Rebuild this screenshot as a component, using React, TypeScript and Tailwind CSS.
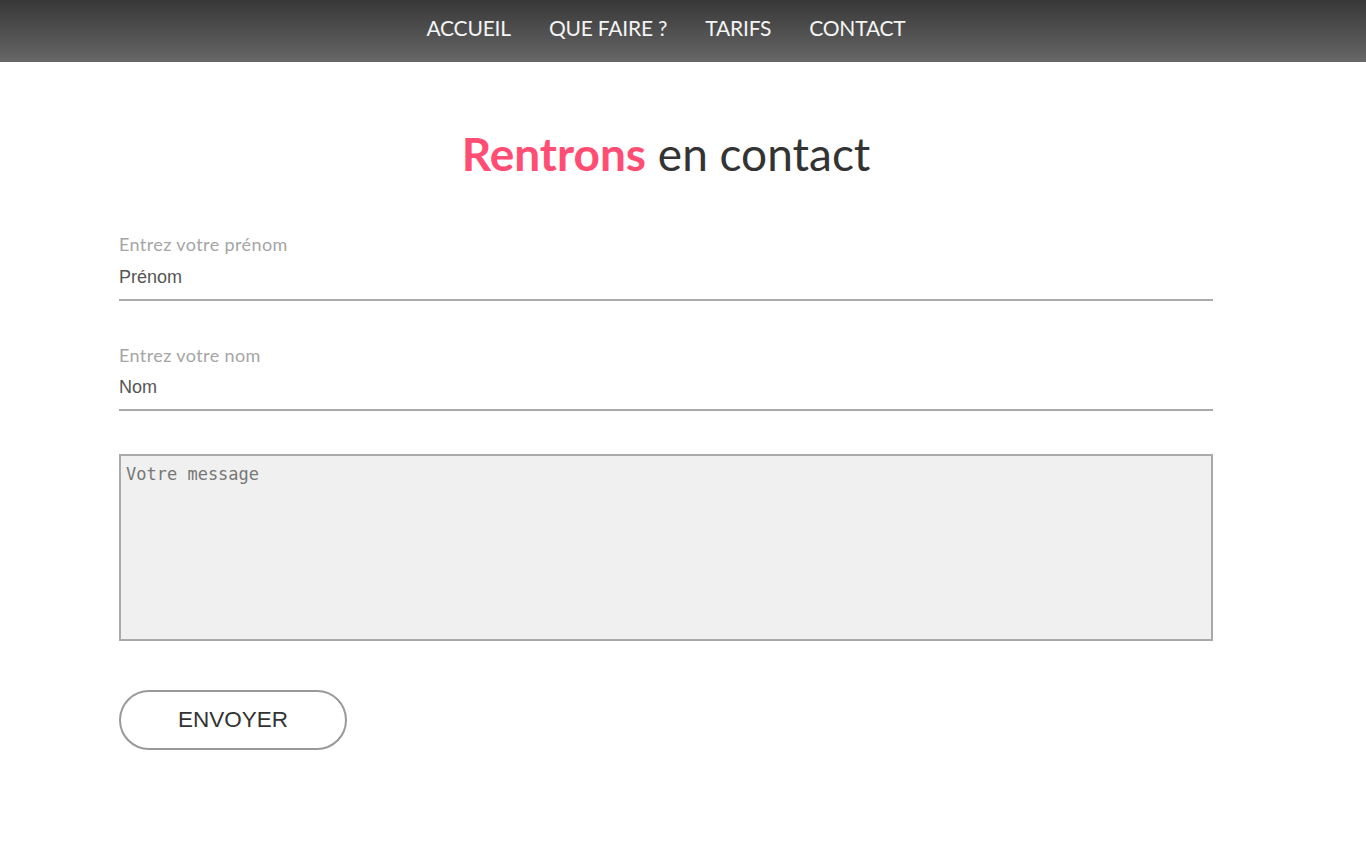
import { useState } from "react";

const navItems = ["ACCUEIL", "QUE FAIRE ?", "TARIFS", "CONTACT"];

export default function App() {
  const [prenom, setPrenom] = useState("");
  const [nom, setNom] = useState("");
  const [message, setMessage] = useState("");

  return (
    <div className="min-h-[855px] bg-white font-['Lato',sans-serif]">
      <nav className="h-[62px] bg-gradient-to-b from-[#383838] to-[#676767]">
        <div className="flex h-full w-[1332px] items-center justify-center gap-[38px] pb-[6px]">
          {navItems.map((item) => (
            <a key={item} href="#" className="text-[21px] tracking-[-0.2px] text-[#f4f4f4]">
              {item}
            </a>
          ))}
        </div>
      </nav>

      <main className="ml-[119px] w-[1094px]">
        <h1 className="mt-[62px] text-center text-[46px] leading-[60px] text-[#333]">
          <span className="font-bold text-[#ff4d73]">Rentrons</span> en contact
        </h1>

        <form className="mt-[49px] flex flex-col" onSubmit={(e) => e.preventDefault()}>
          <label className="flex flex-col">
            <span className="text-[18px] leading-[22px] tracking-[0.4px] text-[#a5a5a5]">Entrez votre prénom</span>
            <input
              value={prenom}
              onChange={(e) => setPrenom(e.target.value)}
              placeholder="Prénom"
              className="h-[46px] border-b-2 border-[#aaa] font-['Liberation_Sans',sans-serif] text-[18px] text-[#555] outline-none placeholder:text-[#555]"
            />
          </label>

          <label className="mt-[43px] flex flex-col">
            <span className="text-[18px] leading-[22px] tracking-[0.4px] text-[#a5a5a5]">Entrez votre nom</span>
            <input
              value={nom}
              onChange={(e) => setNom(e.target.value)}
              placeholder="Nom"
              className="h-[45px] border-b-2 border-[#aaa] font-['Liberation_Sans',sans-serif] text-[18px] text-[#555] outline-none placeholder:text-[#555]"
            />
          </label>

          <textarea
            value={message}
            onChange={(e) => setMessage(e.target.value)}
            placeholder="Votre message"
            className="mt-[43px] h-[187px] resize-none border-2 border-[#aaa] bg-[#f0f0f0] px-[5px] py-[5px] font-['DejaVu_Sans_Mono',monospace] text-[17px] leading-[26px] text-[#777] outline-none placeholder:text-[#777]"
          />

          <button
            type="submit"
            className="mt-[49px] h-[60px] w-[228px] rounded-full border-2 border-[#999] bg-white font-['Liberation_Sans',sans-serif] text-[22.5px] text-[#333]"
          >
            ENVOYER
          </button>
        </form>
      </main>
    </div>
  );
}
